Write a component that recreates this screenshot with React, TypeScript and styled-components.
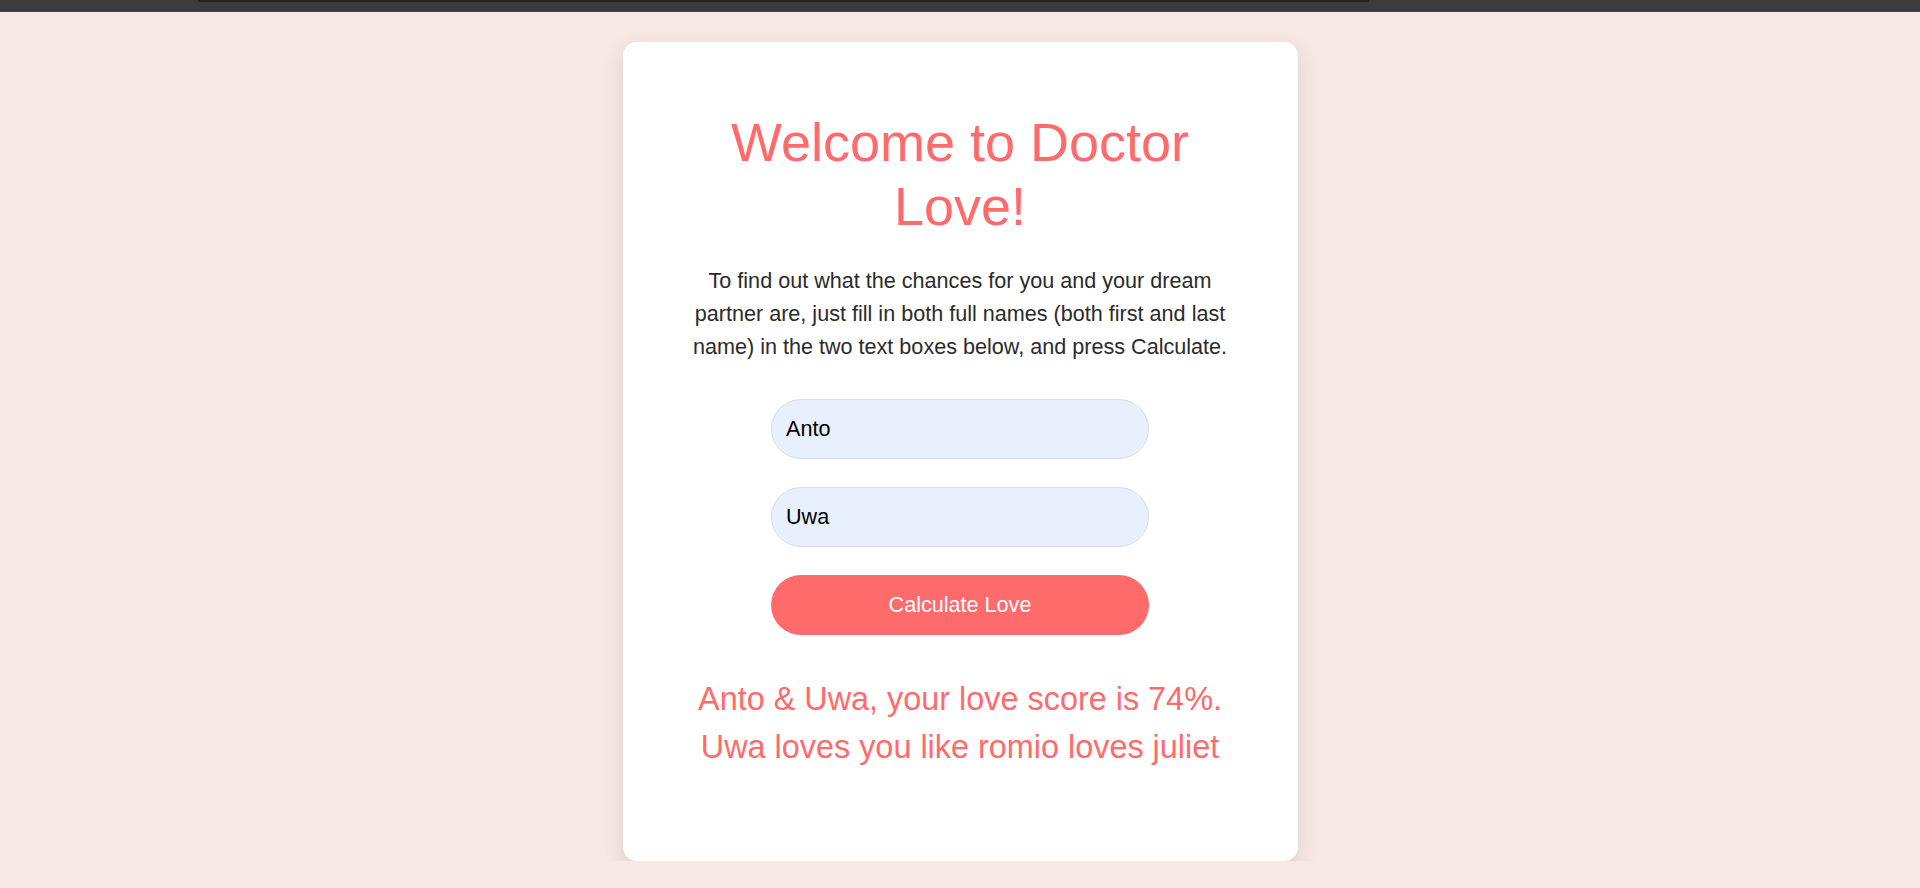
import React, { useState } from 'react'
import styled, { createGlobalStyle } from 'styled-components'

const GlobalStyle = createGlobalStyle`
    html, body {
        margin: 0;
        padding: 0;
        background: #f7e8e4;
        font-family: "Liberation Sans", Arial, sans-serif;
    }

    * {
        box-sizing: border-box;
    }
`

const App = () => {
    const [first, setFirst] = useState('Anto')
    const [second, setSecond] = useState('Uwa')

    return (
        <>
            <GlobalStyle />
            <TopBar>
                <span className="topbar_strip" />
            </TopBar>

            <Page>
                <Card>
                    <Title>Welcome to Doctor Love!</Title>

                    <Intro>
                        To find out what the chances for you and your dream partner are, just fill in both full
                        names (both first and last name) in the two text boxes below, and press Calculate.
                    </Intro>

                    <Form onSubmit={(e) => e.preventDefault()}>
                        <NameInput value={first} onChange={(e) => setFirst(e.target.value)} />
                        <NameInput value={second} onChange={(e) => setSecond(e.target.value)} />
                        <CalcButton type="submit">Calculate Love</CalcButton>
                    </Form>

                    <Result>
                        Anto &amp; Uwa, your love score is 74%. Uwa loves you like romio loves juliet
                    </Result>
                </Card>
            </Page>
        </>
    )
}

export default App

const TopBar = styled.div`
    height: 12px;
    background: #3c3c3c;
    border-bottom: 1px solid #4a4a4a;
    padding: 0 551px 0 198px;

    .topbar_strip {
        display: block;
        height: 2px;
        background: #242424;
    }
`

const Page = styled.main`
    display: flex;
    justify-content: center;
    padding-top: 30px;
`

const Card = styled.div`
    width: 675px;
    background: #ffffff;
    border-radius: 14px;
    padding: 68px 60px 90px;
    box-shadow: 0 8px 20px rgba(110, 70, 60, 0.16);
    text-align: center;
`

const Title = styled.h1`
    margin: 0;
    font-size: 54px;
    font-weight: 400;
    line-height: 64px;
    color: #ff6b6b;
`

const Intro = styled.p`
    margin: 26px 0 0;
    font-size: 21.6px;
    line-height: 33px;
    color: #2b2b2b;
`

const Form = styled.form`
    margin-top: 36px;
    display: flex;
    flex-direction: column;
    align-items: center;
    gap: 28px;
`

const NameInput = styled.input`
    width: 378px;
    height: 60px;
    border: 1px solid #d7dde6;
    border-radius: 30px;
    background: #e8f0fe;
    padding: 0 14px;
    font-family: "Liberation Sans", Arial, sans-serif;
    font-size: 21.6px;
    color: #000;
    outline: none;
`

const CalcButton = styled.button`
    width: 378px;
    height: 60px;
    border: none;
    border-radius: 30px;
    background: #ff6b6b;
    color: #ffffff;
    font-family: "Liberation Sans", Arial, sans-serif;
    font-size: 21.6px;
    cursor: pointer;
`

const Result = styled.p`
    margin: 40px 0 0;
    font-size: 32.4px;
    line-height: 48px;
    color: #ff6b6b;
`
